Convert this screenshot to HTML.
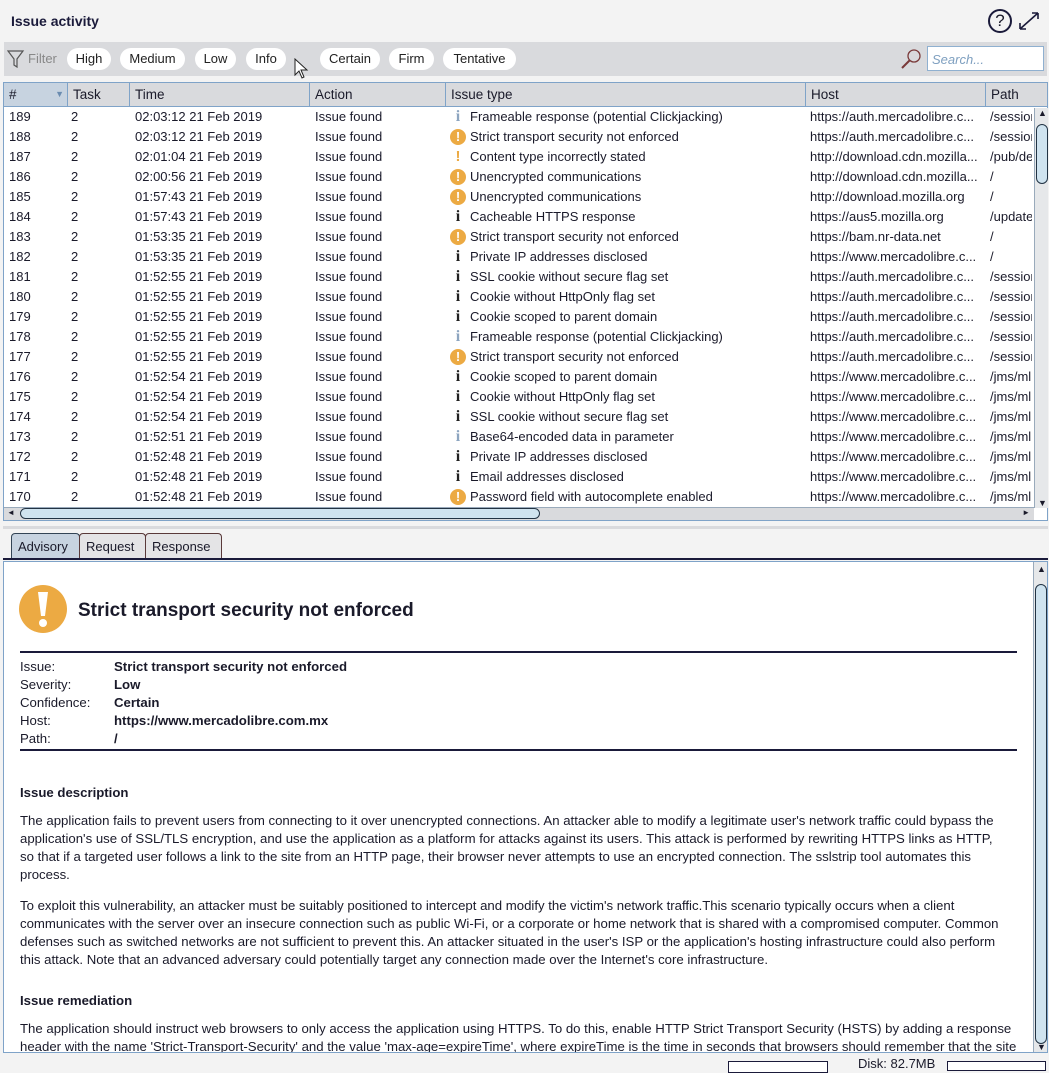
<!DOCTYPE html>
<html><head><meta charset="utf-8"><style>
*{margin:0;padding:0;box-sizing:border-box}
body{width:1049px;height:1070px;background:#f3f3f3;font-family:"Liberation Sans",sans-serif;font-size:13px;color:#1a1a2a;position:relative;overflow:hidden}
.abs{position:absolute}
.title{left:11px;top:13px;font-weight:bold;font-size:14px;color:#1a1a3a}
.toolbar{left:4px;top:42px;width:1043px;height:34px;background:#d9dadd}
.pill{position:absolute;top:48px;height:22px;background:#fff;border-radius:11px;line-height:22px;text-align:center;font-size:13px;color:#222}
.search{left:927px;top:46px;width:117px;height:25px;background:#fff;border:1px solid #8fb0d0;font-style:italic;color:#7fa0c0;padding:5px 4px;font-size:13px}
.tbl{left:3px;top:82px;width:1045px;height:439px;background:#fff;border:1px solid #7fa3c8}
.hdr{position:absolute;left:0;top:0;width:1043px;height:24px;background:#d9dadd;border-bottom:1px solid #7fa3c8}
.hc{position:absolute;top:0;height:23px;line-height:23px;padding-left:5px;border-right:1px solid #7fa3c8;font-size:13.5px}
.row{position:absolute;left:0;height:20px;width:1028px;line-height:20px;white-space:nowrap;overflow:hidden}
.row span{position:absolute;top:0}
.c1{left:5px}.c2{left:67px}.c3{left:131px}.c4{left:311px}.c5{left:466px}.c6{left:806px}.c7{left:986px;width:44px;overflow:hidden}
.ic{position:absolute;left:446px;top:2px;width:16px;height:16px;text-align:center;font-family:"Liberation Serif",serif;font-weight:bold;line-height:16px}
.ci{background:#ecaa43;border-radius:50%;color:#fff;font-family:"Liberation Sans",sans-serif;font-size:13px}
.pl{color:#ecaa43;font-family:"Liberation Sans",sans-serif;font-size:15px}
.di{color:#222;font-size:16px}
.li{color:#8da5c0;font-size:16px}
.vs{left:1030px;top:25px;width:14px;height:400px;background:#e6e8ea;border-left:1px solid #9ab}
.hs{left:0;top:424px;width:1030px;height:13px;background:#d9dadd;border-top:1px solid #9ab}
.tab{position:absolute;top:533px;height:26px;border:1px solid #5a3a3a;border-bottom:none;border-radius:4px 4px 0 0;background:#e4e4e6;line-height:25px;padding:0 6px;font-size:13px}
.adv{left:3px;top:561px;width:1045px;height:492px;background:#fff;border:1px solid #7fa3c8;overflow:hidden}
.p{position:absolute;left:16px;white-space:nowrap;line-height:18px;font-size:13.2px}
.b{font-weight:bold}
</style></head><body>
<div class="abs title">Issue activity</div>
<div class="abs" style="left:988px;top:9px;width:24px;height:24px;border:2px solid #1a1a3a;border-radius:50%;text-align:center;line-height:20px;font-size:17px">?</div>
<svg class="abs" style="left:1017px;top:10px" width="24" height="22" viewBox="0 0 24 22"><path d="M3 19L21 3M3 19v-6M3 19h6M21 3h-6M21 3v6" stroke="#1a1a3a" stroke-width="1.6" fill="none"/></svg>
<div class="abs toolbar"></div>
<svg class="abs" style="left:7px;top:50px" width="18" height="18" viewBox="0 0 18 18"><path d="M1 1h15L10 9v8l-3-2V9z" fill="none" stroke="#555" stroke-width="1.2"/></svg>
<div class="abs" style="left:28px;top:51px;color:#888">Filter</div>
<div class="pill" style="left:67px;width:44px">High</div>
<div class="pill" style="left:120px;width:65px">Medium</div>
<div class="pill" style="left:195px;width:41px">Low</div>
<div class="pill" style="left:246px;width:40px">Info</div>
<div class="pill" style="left:320px;width:60px">Certain</div>
<div class="pill" style="left:389px;width:45px">Firm</div>
<div class="pill" style="left:443px;width:73px">Tentative</div>
<svg class="abs" style="left:294px;top:58px" width="16" height="22" viewBox="0 0 16 22"><path d="M1 1v16l4-4 3 7 2-1-3-7h6z" fill="#fff" stroke="#222"/></svg>
<svg class="abs" style="left:900px;top:48px" width="22" height="22" viewBox="0 0 22 22"><circle cx="14" cy="8" r="6" fill="none" stroke="#7a3a3a" stroke-width="1.3"/><path d="M10 12L2 20" stroke="#7a3a3a" stroke-width="2"/></svg>
<div class="abs search">Search...</div>
<div class="abs tbl">
<div class="hdr">
<div class="hc" style="left:0;width:64px;background:#c7d3e0">#<span style="position:absolute;right:3px;color:#6b8cb0;font-size:9px">▼</span></div>
<div class="hc" style="left:64px;width:62px">Task</div>
<div class="hc" style="left:126px;width:180px">Time</div>
<div class="hc" style="left:306px;width:136px">Action</div>
<div class="hc" style="left:442px;width:360px">Issue type</div>
<div class="hc" style="left:802px;width:180px">Host</div>
<div class="hc" style="left:982px;width:61px;border-right:none">Path</div>
</div>
<div class="row" style="top:24px"><span class="c1">189</span><span class="c2">2</span><span class="c3">02:03:12 21 Feb 2019</span><span class="c4">Issue found</span><b class="ic li">i</b><span class="c5">Frameable response (potential Clickjacking)</span><span class="c6">https://auth.mercadolibre.c...</span><span class="c7">/sessions</span></div>
<div class="row" style="top:44px"><span class="c1">188</span><span class="c2">2</span><span class="c3">02:03:12 21 Feb 2019</span><span class="c4">Issue found</span><b class="ic ci">!</b><span class="c5">Strict transport security not enforced</span><span class="c6">https://auth.mercadolibre.c...</span><span class="c7">/sessions</span></div>
<div class="row" style="top:64px"><span class="c1">187</span><span class="c2">2</span><span class="c3">02:01:04 21 Feb 2019</span><span class="c4">Issue found</span><b class="ic pl">!</b><span class="c5">Content type incorrectly stated</span><span class="c6">http://download.cdn.mozilla...</span><span class="c7">/pub/dev</span></div>
<div class="row" style="top:84px"><span class="c1">186</span><span class="c2">2</span><span class="c3">02:00:56 21 Feb 2019</span><span class="c4">Issue found</span><b class="ic ci">!</b><span class="c5">Unencrypted communications</span><span class="c6">http://download.cdn.mozilla...</span><span class="c7">/</span></div>
<div class="row" style="top:104px"><span class="c1">185</span><span class="c2">2</span><span class="c3">01:57:43 21 Feb 2019</span><span class="c4">Issue found</span><b class="ic ci">!</b><span class="c5">Unencrypted communications</span><span class="c6">http://download.mozilla.org</span><span class="c7">/</span></div>
<div class="row" style="top:124px"><span class="c1">184</span><span class="c2">2</span><span class="c3">01:57:43 21 Feb 2019</span><span class="c4">Issue found</span><b class="ic di">i</b><span class="c5">Cacheable HTTPS response</span><span class="c6">https://aus5.mozilla.org</span><span class="c7">/update</span></div>
<div class="row" style="top:144px"><span class="c1">183</span><span class="c2">2</span><span class="c3">01:53:35 21 Feb 2019</span><span class="c4">Issue found</span><b class="ic ci">!</b><span class="c5">Strict transport security not enforced</span><span class="c6">https://bam.nr-data.net</span><span class="c7">/</span></div>
<div class="row" style="top:164px"><span class="c1">182</span><span class="c2">2</span><span class="c3">01:53:35 21 Feb 2019</span><span class="c4">Issue found</span><b class="ic di">i</b><span class="c5">Private IP addresses disclosed</span><span class="c6">https://www.mercadolibre.c...</span><span class="c7">/</span></div>
<div class="row" style="top:184px"><span class="c1">181</span><span class="c2">2</span><span class="c3">01:52:55 21 Feb 2019</span><span class="c4">Issue found</span><b class="ic di">i</b><span class="c5">SSL cookie without secure flag set</span><span class="c6">https://auth.mercadolibre.c...</span><span class="c7">/sessions</span></div>
<div class="row" style="top:204px"><span class="c1">180</span><span class="c2">2</span><span class="c3">01:52:55 21 Feb 2019</span><span class="c4">Issue found</span><b class="ic di">i</b><span class="c5">Cookie without HttpOnly flag set</span><span class="c6">https://auth.mercadolibre.c...</span><span class="c7">/sessions</span></div>
<div class="row" style="top:224px"><span class="c1">179</span><span class="c2">2</span><span class="c3">01:52:55 21 Feb 2019</span><span class="c4">Issue found</span><b class="ic di">i</b><span class="c5">Cookie scoped to parent domain</span><span class="c6">https://auth.mercadolibre.c...</span><span class="c7">/sessions</span></div>
<div class="row" style="top:244px"><span class="c1">178</span><span class="c2">2</span><span class="c3">01:52:55 21 Feb 2019</span><span class="c4">Issue found</span><b class="ic li">i</b><span class="c5">Frameable response (potential Clickjacking)</span><span class="c6">https://auth.mercadolibre.c...</span><span class="c7">/sessions</span></div>
<div class="row" style="top:264px"><span class="c1">177</span><span class="c2">2</span><span class="c3">01:52:55 21 Feb 2019</span><span class="c4">Issue found</span><b class="ic ci">!</b><span class="c5">Strict transport security not enforced</span><span class="c6">https://auth.mercadolibre.c...</span><span class="c7">/sessions</span></div>
<div class="row" style="top:284px"><span class="c1">176</span><span class="c2">2</span><span class="c3">01:52:54 21 Feb 2019</span><span class="c4">Issue found</span><b class="ic di">i</b><span class="c5">Cookie scoped to parent domain</span><span class="c6">https://www.mercadolibre.c...</span><span class="c7">/jms/ml</span></div>
<div class="row" style="top:304px"><span class="c1">175</span><span class="c2">2</span><span class="c3">01:52:54 21 Feb 2019</span><span class="c4">Issue found</span><b class="ic di">i</b><span class="c5">Cookie without HttpOnly flag set</span><span class="c6">https://www.mercadolibre.c...</span><span class="c7">/jms/ml</span></div>
<div class="row" style="top:324px"><span class="c1">174</span><span class="c2">2</span><span class="c3">01:52:54 21 Feb 2019</span><span class="c4">Issue found</span><b class="ic di">i</b><span class="c5">SSL cookie without secure flag set</span><span class="c6">https://www.mercadolibre.c...</span><span class="c7">/jms/ml</span></div>
<div class="row" style="top:344px"><span class="c1">173</span><span class="c2">2</span><span class="c3">01:52:51 21 Feb 2019</span><span class="c4">Issue found</span><b class="ic li">i</b><span class="c5">Base64-encoded data in parameter</span><span class="c6">https://www.mercadolibre.c...</span><span class="c7">/jms/ml</span></div>
<div class="row" style="top:364px"><span class="c1">172</span><span class="c2">2</span><span class="c3">01:52:48 21 Feb 2019</span><span class="c4">Issue found</span><b class="ic di">i</b><span class="c5">Private IP addresses disclosed</span><span class="c6">https://www.mercadolibre.c...</span><span class="c7">/jms/ml</span></div>
<div class="row" style="top:384px"><span class="c1">171</span><span class="c2">2</span><span class="c3">01:52:48 21 Feb 2019</span><span class="c4">Issue found</span><b class="ic di">i</b><span class="c5">Email addresses disclosed</span><span class="c6">https://www.mercadolibre.c...</span><span class="c7">/jms/ml</span></div>
<div class="row" style="top:404px"><span class="c1">170</span><span class="c2">2</span><span class="c3">01:52:48 21 Feb 2019</span><span class="c4">Issue found</span><b class="ic ci">!</b><span class="c5">Password field with autocomplete enabled</span><span class="c6">https://www.mercadolibre.c...</span><span class="c7">/jms/ml</span></div>
<div class="abs vs"><div style="position:absolute;left:1px;top:16px;width:12px;height:60px;border:1px solid #234;border-radius:6px;background:#cfe3ef"></div><div style="position:absolute;top:0;left:3px;font-size:9px">▲</div><div style="position:absolute;bottom:0;left:3px;font-size:9px">▼</div></div>
<div class="abs hs"><div style="position:absolute;left:16px;top:0;width:520px;height:11px;border:1px solid #234;border-radius:6px;background:#cfe3ef"></div><div style="position:absolute;left:3px;top:0;font-size:8px">◄</div><div style="position:absolute;right:4px;top:0;font-size:8px">►</div></div>
</div>
<div class="abs" style="left:3px;top:526px;width:1045px;height:3px;background:#d9dadd"></div>
<div class="tab" style="left:11px;width:69px;background:#c7d3e0;border-color:#345">Advisory</div>
<div class="tab" style="left:79px;width:67px">Request</div>
<div class="tab" style="left:145px;width:77px">Response</div>
<div class="abs" style="left:3px;top:558px;width:1045px;height:2px;background:#1a1a3a"></div>
<div class="abs adv">
<div style="position:absolute;left:15px;top:23px;width:48px;height:48px;border-radius:50%;background:#ecaa43"></div>
<div style="position:absolute;left:34px;top:30px;width:10px;height:24px;background:#fff;clip-path:polygon(0 0,100% 0,70% 100%,30% 100%)"></div>
<div style="position:absolute;left:35px;top:57px;width:8px;height:8px;border-radius:50%;background:#fff"></div>
<div class="p b" style="left:74px;top:38px;font-size:19px;line-height:22px">Strict transport security not enforced</div>
<div style="position:absolute;left:16px;top:89px;width:997px;height:2px;background:#1a1a3a"></div>
<div class="p" style="top:96px">Issue:</div><div class="p b" style="left:110px;top:96px">Strict transport security not enforced</div>
<div class="p" style="top:114px">Severity:</div><div class="p b" style="left:110px;top:114px">Low</div>
<div class="p" style="top:132px">Confidence:</div><div class="p b" style="left:110px;top:132px">Certain</div>
<div class="p" style="top:150px">Host:</div><div class="p b" style="left:110px;top:150px">https://www.mercadolibre.com.mx</div>
<div class="p" style="top:168px">Path:</div><div class="p b" style="left:110px;top:168px">/</div>
<div style="position:absolute;left:16px;top:187px;width:997px;height:2px;background:#1a1a3a"></div>
<div class="p b" style="top:222px">Issue description</div>
<div class="p" style="top:250px">The application fails to prevent users from connecting to it over unencrypted connections. An attacker able to modify a legitimate user's network traffic could bypass the<br>application's use of SSL/TLS encryption, and use the application as a platform for attacks against its users. This attack is performed by rewriting HTTPS links as HTTP,<br>so that if a targeted user follows a link to the site from an HTTP page, their browser never attempts to use an encrypted connection. The sslstrip tool automates this<br>process.</div>
<div class="p" style="top:335px">To exploit this vulnerability, an attacker must be suitably positioned to intercept and modify the victim's network traffic.This scenario typically occurs when a client<br>communicates with the server over an insecure connection such as public Wi-Fi, or a corporate or home network that is shared with a compromised computer. Common<br>defenses such as switched networks are not sufficient to prevent this. An attacker situated in the user's ISP or the application's hosting infrastructure could also perform<br>this attack. Note that an advanced adversary could potentially target any connection made over the Internet's core infrastructure.</div>
<div class="p b" style="top:430px">Issue remediation</div>
<div class="p" style="top:458px">The application should instruct web browsers to only access the application using HTTPS. To do this, enable HTTP Strict Transport Security (HSTS) by adding a response<br>header with the name 'Strict-Transport-Security' and the value 'max-age=expireTime', where expireTime is the time in seconds that browsers should remember that the site</div>
<div style="position:absolute;left:1029px;top:0;width:14px;height:490px;background:#e6e8ea;border-left:1px solid #9ab"><div style="position:absolute;left:1px;top:22px;width:12px;height:460px;border:1px solid #234;border-radius:6px;background:#cfe3ef"></div><div style="position:absolute;top:2px;left:3px;font-size:9px">▲</div><div style="position:absolute;bottom:0;left:3px;font-size:9px">▼</div></div>
</div>
<div class="abs" style="left:728px;top:1061px;width:100px;height:12px;border:1px solid #1a1a3a;background:#fff"></div>
<div class="abs" style="left:858px;top:1056px;font-size:13px">Disk: 82.7MB</div>
<div class="abs" style="left:947px;top:1061px;width:99px;height:10px;border:1px solid #1a1a3a;background:#fff"></div>
</body></html>
